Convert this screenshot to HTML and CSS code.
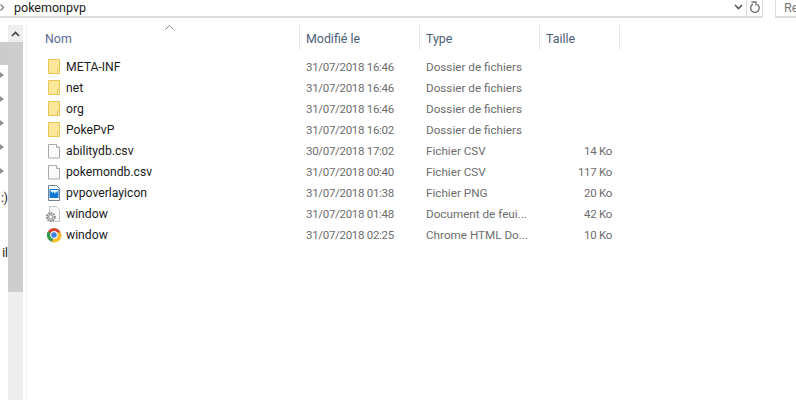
FILE: index.html
```html
<!DOCTYPE html>
<html lang="fr">
<head>
<meta charset="utf-8">
<title>pokemonpvp</title>
<link rel="stylesheet" href="styles.css">
</head>
<body>
<svg class="defs" width="0" height="0" aria-hidden="true">
  <defs>
    <symbol id="folder" viewBox="0 0 16 16">
      <path d="M2.500 .5h11v14h-11z" fill="#fde79a" stroke="#e9c555"/>
      <path d="M11.500 9.500h2v5h-2z" fill="#fff3c4" stroke="#e9c555"/>
    </symbol>
    <symbol id="doc" viewBox="0 0 16 16">
      <path d="M2.500 1.500h8l3 3v10.500h-11z" fill="#fafafa" stroke="#a9a9a9"/>
      <path d="M10.500 1.500v3h3" fill="#fff" stroke="#a9a9a9"/>
    </symbol>
  </defs>
</svg>
<header class="topbar">
  <span class="crumb-arrow"><svg width="5" height="7" viewBox="0 0 5 7"><path d="M.5 .5l3 3-3 3" fill="none" stroke="#8a8a8a" stroke-width="1.500"/></svg></span>
  <span class="path">pokemonpvp</span>
  <span class="dropdown"><svg width="9" height="6" viewBox="0 0 9 6"><path d="M1 1l3.500 3.500L8 1" fill="none" stroke="#555" stroke-width="1.600"/></svg></span>
  <span class="refresh"><svg width="12" height="13" viewBox="0 0 12 13"><path d="M4 3.200a4.300 4.300 0 1 0 4.200 .2" fill="none" stroke="#707070" stroke-width="1.400"/><path d="M2.500 1h4.500v3.500" fill="none" stroke="#707070" stroke-width="1.300"/></svg></span>
  <span class="search">Re</span>
</header>
<main class="body">
  <nav class="rail">
    <div class="rail-item rail-selected"></div>
    <div class="rail-item"><i class="pin"></i></div>
    <div class="rail-item"><i class="pin"></i></div>
    <div class="rail-item"><i class="pin"></i></div>
    <div class="rail-item"><i class="pin"></i></div>
    <div class="rail-item"><i class="pin"></i></div>
    <div class="rail-item rail-text rail-smile">:)</div>
    <div class="rail-item rail-gap"></div>
    <div class="rail-item rail-text">il</div>
  </nav>
  <div class="scrollbar">
    <div class="scroll-up"><svg width="9" height="6" viewBox="0 0 9 6"><path d="M1 5l3.500-3.500L8 5" fill="none" stroke="#404040" stroke-width="1.600"/></svg></div>
    <div class="scroll-thumb"></div>
  </div>
  <section class="list">
    <div class="sort-row"><svg width="9" height="5" viewBox="0 0 9 5"><path d="M.5 4.500l4-4 4 4" fill="none" stroke="#8a8a8a"/></svg></div>
    <div class="row head">
      <span class="name-col nom">Nom</span>
      <span>Modifié le</span>
      <span>Type</span>
      <span>Taille</span>
    </div>
    <div class="rows">
      <div class="row"><span class="name-col"><svg class="ico"><use href="#folder"/></svg>META-INF</span><span class="date">31/07/2018 16:46</span><span class="type">Dossier de fichiers</span><span class="size"></span></div>
      <div class="row"><span class="name-col"><svg class="ico"><use href="#folder"/></svg>net</span><span class="date">31/07/2018 16:46</span><span class="type">Dossier de fichiers</span><span class="size"></span></div>
      <div class="row"><span class="name-col"><svg class="ico"><use href="#folder"/></svg>org</span><span class="date">31/07/2018 16:46</span><span class="type">Dossier de fichiers</span><span class="size"></span></div>
      <div class="row"><span class="name-col"><svg class="ico"><use href="#folder"/></svg>PokePvP</span><span class="date">31/07/2018 16:02</span><span class="type">Dossier de fichiers</span><span class="size"></span></div>
      <div class="row"><span class="name-col"><svg class="ico"><use href="#doc"/></svg>abilitydb.csv</span><span class="date">30/07/2018 17:02</span><span class="type">Fichier CSV</span><span class="size">14 Ko</span></div>
      <div class="row"><span class="name-col"><svg class="ico"><use href="#doc"/></svg>pokemondb.csv</span><span class="date">31/07/2018 00:40</span><span class="type">Fichier CSV</span><span class="size">117 Ko</span></div>
      <div class="row"><span class="name-col"><svg class="ico" viewBox="0 0 16 16"><path d="M2.500 .5h8l3 3v12h-11z" fill="#fafafa" stroke="#6f8296"/><rect x="3.500" y="4" width="9" height="9" fill="#0f78d4"/><path d="M4 5h8l-.8 3-1.200-1.500-1 2.500-1.500-2.500-1 1.500-1-1z" fill="#e4f3fd"/></svg>pvpoverlayicon</span><span class="date">31/07/2018 01:38</span><span class="type">Fichier PNG</span><span class="size">20 Ko</span></div>
      <div class="row"><span class="name-col"><svg class="ico ico-wide" viewBox="0 0 16 16"><path d="M3.500 .5h7l3 3v12h-10z" fill="#fafafa" stroke="#c4c4c4"/><circle cx="4.800" cy="11" r="4" fill="#ececec" stroke="#8a8a8a" stroke-width="2" stroke-dasharray="1.700 .9"/><circle cx="4.800" cy="11" r="2.200" fill="#f6f6f6" stroke="#8a8a8a" stroke-width="1"/></svg>window</span><span class="date">31/07/2018 01:48</span><span class="type">Document de feui...</span><span class="size">42 Ko</span></div>
      <div class="row"><span class="name-col"><svg class="ico" viewBox="0 0 16 16"><circle cx="8" cy="8" r="7" fill="#dc4437"/><path d="M8 8L1.900 4.500A7 7 0 0 0 8 15z" fill="#2f9e4f"/><path d="M8 8L6 15A7 7 0 0 0 14.800 5.500H8z" fill="#fbc02d"/><circle cx="8" cy="8" r="3.300" fill="#3f7fe0" stroke="#f4f4f4" stroke-width="1.200"/></svg>window</span><span class="date">31/07/2018 02:25</span><span class="type">Chrome HTML Do...</span><span class="size">10 Ko</span></div>
    </div>
  </section>
</main>
</body>
</html>
```
FILE: styles.css
```css
* { box-sizing: border-box; }
html, body { margin: 0; height: 100%; }
body {
  width: 796px;
  height: 400px;
  overflow: hidden;
  background: #fff;
  font-family: "Roboto", "Liberation Sans", sans-serif;
  font-size: 12px;
  display: flex;
  flex-direction: column;
}
.defs { position: absolute; }
.topbar {
  height: 18px;
  flex: none;
  display: flex;
  align-items: center;
  color: #1a1a1a;
  font-size: 12.5px;
  margin-top: -1px;
}
.topbar > * {
  border-bottom: 2px solid #dcdcdc;
  height: 19px;
  display: flex;
  align-items: center;
}
.crumb-arrow { width: 14px; }
.path { flex: 1; }
.dropdown { width: 16px; justify-content: center; }
.refresh {
  width: 17px;
  justify-content: center;
  border-left: 1px solid #dcdcdc;
  border-right: 1px solid #dcdcdc;
}
.search {
  width: 21px;
  margin-left: 12px;
  padding-left: 8px;
  border-left: 1px solid #dcdcdc;
  color: #777;
  overflow: hidden;
}
.body { flex: 1; display: flex; min-height: 0; padding-top: 8px; }
.rail {
  width: 8px;
  flex: none;
  padding-top: 17px;
  display: flex;
  flex-direction: column;
}
.rail-item {
  height: 24px;
  flex: none;
  display: flex;
  align-items: center;
  font-size: 12px;
  color: #111;
  white-space: nowrap;
}
.rail-selected { height: 23px; margin-bottom: -2px; background: #cccccc; }
.rail-smile { margin-top: 3px; }
.rail-gap { height: 31px; }
.pin {
  width: 4px;
  height: 6px;
  background: #8f8f8f;
  clip-path: polygon(0 0, 100% 50%, 0 100%);
  display: block;
}
.rail-text { justify-content: flex-end; }
.scrollbar {
  width: 15px;
  flex: none;
  background: #eeeeee;
  display: flex;
  flex-direction: column;
}
.scroll-up { height: 17px; display: flex; align-items: center; justify-content: center; }
.scroll-thumb { height: 250px; background: #cdcdcd; }
.list {
  flex: 1;
  margin-left: 3px;
  border-left: 1px solid #f1f1f1;
  position: relative;
}
.sort-row { position: absolute; left: 138px; top: 0; line-height: 0; }
.row {
  display: grid;
  grid-template-columns: 273px 120px 120px 80px;
  height: 21px;
  align-items: center;
  color: #6d6d6d;
  white-space: nowrap;
}
.row > span { padding-left: 6px; }
.row .name-col {
  color: #1c1c1c;
  font-size: 12.2px;
  padding-left: 19px;
  display: flex;
  align-items: center;
  gap: 4px;
}
.row .date, .row .size { font-size: 11.5px; letter-spacing: -0.3px; }
.row .type { font-size: 11.7px; }
.row .size { text-align: right; padding-right: 8px; }
.ico { width: 16px; height: 16px; flex: none; overflow: visible; }
.head { height: 25px; color: #4c607a; font-size: 12.4px; }
.head > span {
  height: 25px;
  line-height: 27px;
  border-right: 1px solid #e6e6e6;
}
.row .nom { color: #5a6a94; font-size: 12.4px; align-items: stretch; padding-left: 18px; }
.rows { margin-top: 6px; }
```
